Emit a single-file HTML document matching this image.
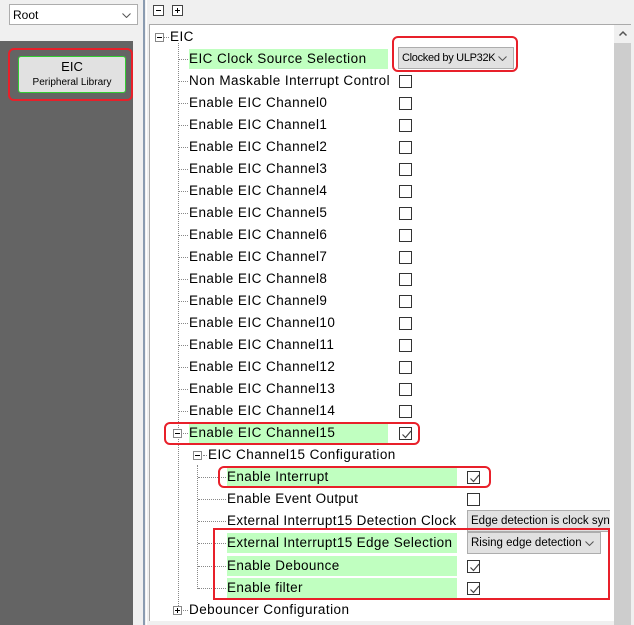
<!DOCTYPE html>
<html><head><style>
*{margin:0;padding:0;box-sizing:border-box}
body{width:634px;height:625px;position:relative;background:#f0f0f0;font-family:"Liberation Sans",sans-serif;font-size:13.5px;color:#000;overflow:hidden}
.a{position:absolute}
.t{position:absolute;height:20px;line-height:20px;white-space:nowrap;letter-spacing:0.45px}
.g{background:#c0ffc0}
.cb{position:absolute;width:13px;height:13px;border:1px solid #333;background:#fff}
.cb svg{position:absolute;left:1px;top:1px}
.hl{position:absolute;border-top:1px dotted #888;width:8px}
.vl{position:absolute;border-left:1px dotted #888}
.ex{position:absolute;width:9px;height:9px;border:1px solid #888;background:#fff}
.ex:before{content:"";position:absolute;left:1px;top:3px;width:5px;height:1px;background:#000}
.ex.p:after{content:"";position:absolute;left:3px;top:1px;width:1px;height:5px;background:#000}
.red{position:absolute;border:2px solid #e8202a}
.combo{position:absolute;background:#e1e1e1;border:1px solid #adadad;height:22px;line-height:20px;padding-left:3px;font-size:11.5px;white-space:nowrap;overflow:hidden}
.combo svg{position:absolute;right:6px;top:8px}
</style></head><body>
<div class="a" style="left:0;top:0;width:133px;height:625px;background:#f0f0f0"></div>
<div class="combo" style="left:9px;top:4px;width:129px;height:21px;background:#fff;font-size:12px">Root<svg width="9" height="5"><path d="M0.5 0.5L4.5 4.5L8.5 0.5" fill="none" stroke="#555"/></svg></div>
<div class="a" style="left:0;top:41px;width:133px;height:584px;background:#646464"></div>
<div class="a" style="left:18px;top:56px;width:108px;height:37px;background:#e1e1e1;border:1px solid #3c3;border-radius:3px;text-align:center">
<div style="font-size:13px;line-height:18px;margin-top:1px">EIC</div>
<div style="font-size:10px;line-height:14px">Peripheral Library</div></div>
<div class="red" style="left:8px;top:48px;width:125px;height:53px;border-radius:6px"></div>
<div class="a" style="left:143px;top:0;width:2px;height:625px;background:#8a9bb0"></div>
<div class="a" style="left:146px;top:0;width:1px;height:625px;background:#fff"></div>
<div class="a" style="left:153px;top:5px;width:11px;height:11px;border:1px solid #444;background:#fff"><div class="a" style="left:2px;top:4px;width:5px;height:1px;background:#000"></div></div>
<div class="a" style="left:172px;top:5px;width:11px;height:11px;border:1px solid #444;background:#fff"><div class="a" style="left:2px;top:4px;width:5px;height:1px;background:#000"></div><div class="a" style="left:4px;top:2px;width:1px;height:5px;background:#000"></div></div>
<div class="a" style="left:149px;top:24px;width:465px;height:597px;background:#fff;border-top:1px solid #aaa;border-left:1px solid #aaa"></div>
<div class="a" style="left:614px;top:24px;width:18px;height:601px;background:#cdcdcd;border-top:1px solid #aaa"></div>
<div class="a" style="left:614px;top:25px;width:18px;height:18px;background:#f0f0f0"><svg width="18" height="18"><path d="M5.5 10.5L9 7L12.5 10.5" fill="none" stroke="#555" stroke-width="1.5"/></svg></div>
<div class="a" style="left:631px;top:0;width:3px;height:625px;background:#f0f0f0"></div>

<div class="ex" style="left:155px;top:33px"></div><div class="hl" style="left:164px;top:37px;width:5px"></div>
<div class="t" style="left:170px;top:27px">EIC</div>
<div class="vl" style="left:178px;top:43px;height:567px"></div>

<div id="rows"></div>
<script>
var CK='<svg width="11" height="11"><path d="M1.5 5.5L4.5 8.5L10 2" fill="none" stroke="#444" stroke-width="1.2"/></svg>';
var L=["EIC Clock Source Selection","Non Maskable Interrupt Control"];for(var i=0;i<15;i++)L.push("Enable EIC Channel"+i);L.push("Enable EIC Channel15");
var h="";
for(var i=0;i<L.length;i++){var y=59+22*i;
 var green=(i==0||i==17);
 if(i==17){h+='<div class="ex" style="left:173px;top:'+(y-4)+'px"></div><div class="hl" style="left:183px;top:'+y+'px;width:5px"></div>';}
 else h+='<div class="hl" style="left:179px;top:'+y+'px;width:9px"></div>';
 h+='<div class="t'+(green?' g':'')+'" style="left:189px;top:'+(y-10)+'px;width:199px">'+L[i]+'</div>';
 if(i>0)h+='<div class="cb" style="left:399px;top:'+(y-6)+'px">'+((i==17)?CK:'')+'</div>';
}
var y=455;h+='<div class="ex" style="left:193px;top:'+(y-4)+'px"></div><div class="hl" style="left:203px;top:'+y+'px;width:4px"></div><div class="t" style="left:208px;top:'+(y-10)+'px">EIC Channel15 Configuration</div>';
h+='<div class="vl" style="left:197px;top:465px;height:124px"></div>';
var S=[["Enable Interrupt",1,1],["Enable Event Output",0,0],["External Interrupt15 Detection Clock",0,2],["External Interrupt15 Edge Selection",1,3],["Enable Debounce",1,1],["Enable filter",1,1]];
var ys=[477,499,521,543,566,588];
for(var j=0;j<S.length;j++){var y=ys[j];
 h+='<div class="hl" style="left:198px;top:'+y+'px;width:28px"></div>';
 h+='<div class="t'+(S[j][1]?' g':'')+'" style="left:227px;top:'+(y-10)+'px;width:230px;letter-spacing:0.35px">'+S[j][0]+'</div>';
 if(S[j][2]<2)h+='<div class="cb" style="left:467px;top:'+(y-6)+'px">'+(S[j][2]?CK:'')+'</div>';
}
document.getElementById('rows').innerHTML=h;
</script>
<div class="combo" style="left:398px;top:47px;width:116px;font-size:11px;letter-spacing:-0.3px">Clocked by ULP32K<svg width="9" height="5"><path d="M0.5 0.5L4.5 4.5L8.5 0.5" fill="none" stroke="#555"/></svg></div>
<div class="combo" style="left:467px;top:510px;width:143px;border-right:none">Edge detection is clock synchronized</div>
<div class="combo" style="left:467px;top:532px;width:134px">Rising edge detection<svg width="9" height="5"><path d="M0.5 0.5L4.5 4.5L8.5 0.5" fill="none" stroke="#555"/></svg></div>

<div class="ex p" style="left:173px;top:606px"></div><div class="hl" style="left:183px;top:610px;width:5px"></div>
<div class="t" style="left:189px;top:600px">Debouncer Configuration</div>

<div class="red" style="left:392px;top:36px;width:126px;height:36px;border-radius:6px"></div>
<div class="red" style="left:164px;top:422px;width:256px;height:23px;border-radius:6px"></div>
<div class="red" style="left:218px;top:466px;width:273px;height:22px;border-radius:6px"></div>
<div class="red" style="left:213px;top:528px;width:397px;height:72px"></div>
</body></html>
